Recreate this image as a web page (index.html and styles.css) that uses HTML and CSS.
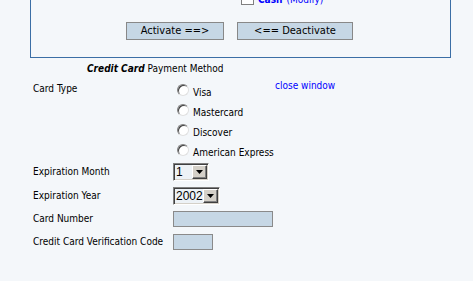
FILE: index.html
```html
<!DOCTYPE html>
<html>
<head>
<meta charset="utf-8">
<link rel="stylesheet" href="styles.css">
</head>
<body>
<div class="box">
  <div class="cash-row">
    <span class="check"></span>
    <a class="cash" href="#">Cash</a>
    <a class="modify" href="#">(Modify)</a>
  </div>
  <div class="btn-row">
    <button class="btn btn-act">Activate ==&gt;</button>
    <button class="btn btn-deact">&lt;== Deactivate</button>
  </div>
</div>

<div class="form">
  <div class="form-title"><b><i>Credit Card</i></b> Payment Method</div>
  <div class="grid">
    <div class="label label-top">Card Type</div>
    <div class="radios">
      <label class="radio-item"><input type="radio" name="ct" class="radio"><span class="radio-text">Visa</span></label>
      <label class="radio-item"><input type="radio" name="ct" class="radio"><span class="radio-text">Mastercard</span></label>
      <label class="radio-item"><input type="radio" name="ct" class="radio"><span class="radio-text">Discover</span></label>
      <label class="radio-item"><input type="radio" name="ct" class="radio"><span class="radio-text">American Express</span></label>
    </div>
    <div class="close-cell"><a class="close" href="#">close window</a></div>

    <div class="label row-month">Expiration Month</div>
    <div class="ctrl row-month">
      <span class="sel"><select class="sel-input sel-month"><option>1</option><option>2</option><option>12</option></select><span class="sel-btn"><svg width="7" height="4" viewBox="0 0 7 4"><path d="M0 0h7L3.5 4z" fill="#000"/></svg></span></span>
    </div>
    <div class="spacer row-month"></div>

    <div class="label row-year">Expiration Year</div>
    <div class="ctrl row-year">
      <span class="sel"><select class="sel-input sel-year"><option>2002</option><option>2003</option></select><span class="sel-btn"><svg width="7" height="4" viewBox="0 0 7 4"><path d="M0 0h7L3.5 4z" fill="#000"/></svg></span></span>
    </div>
    <div class="spacer row-year"></div>

    <div class="label row-num">Card Number</div>
    <div class="ctrl row-num"><input class="text-in in-num" type="text"></div>
    <div class="spacer row-num"></div>

    <div class="label row-ccv">Credit Card Verification Code</div>
    <div class="ctrl row-ccv"><input class="text-in in-ccv" type="text"></div>
    <div class="spacer row-ccv"></div>
  </div>
</div>
</body>
</html>
```

FILE: styles.css
```css
html, body {
  margin: 0;
  padding: 0;
  background: #f4f7fa;
}
body {
  font-family: "DejaVu Sans Condensed", "DejaVu Sans", sans-serif;
  font-stretch: condensed;
  font-size: 10px;
  line-height: 12px;
  color: #000;
  overflow: hidden;
}
a { text-decoration: none; }

.box {
  margin: -12px 0 0 30px;
  width: 419px;
  border: 1px solid #3b6ea5;
  padding: 5px 0 17px 0;
}
.cash-row {
  display: flex;
  align-items: flex-end;
  height: 12px;
  padding-left: 210px;
}
.check {
  width: 11px;
  height: 11px;
  background: #fff;
  border: 1px solid #808080;
  margin-right: 4px;
  margin-bottom: 1px;
}
.cash { color: #0000ff; font-weight: bold; margin-right: 4px; }
.modify { color: #0000ff; }

.btn-row {
  display: flex;
  gap: 13px;
  padding-left: 95px;
  margin-top: 16px;
}
.btn {
  font: inherit;
  font-size: 11px;
  height: 18px;
  padding: 0;
  margin: 0;
  background: #c6d7e5;
  border: 1px solid #888888;
  color: #000;
  line-height: 16px;
}
.btn-act { width: 98px; }
.btn-deact { width: 116px; }

.form {
  margin: 5px 0 0 33px;
}
.form-title {
  padding-left: 54px;
  height: 12px;
}
.grid {
  margin-top: 4px;
  display: grid;
  grid-template-columns: 140px 102px auto;
  align-items: center;
}
.label-top { align-self: start; padding-top: 4px; }
.radios { display: flex; flex-direction: column; }
.radio-item {
  display: flex;
  align-items: flex-start;
  height: 20px;
}
.radio {
  appearance: none;
  -webkit-appearance: none;
  width: 12px;
  height: 12px;
  margin: 5px 4px 0 4px;
  border-radius: 50%;
  background: #fff;
  border: 1px solid;
  border-color: #808080 #e0e0e0 #e0e0e0 #808080;
  box-shadow: inset 1px 1px 0 #404040;
}
.radio-text { padding-top: 8px; }
.close-cell { align-self: start; padding-top: 1px; }
.close { color: #0000ff; }

.row-month { margin-top: 4px; height: 18px; display: flex; align-items: center; }
.row-year { margin-top: 6px; height: 18px; display: flex; align-items: center; }
.row-num { margin-top: 6px; height: 16px; display: flex; align-items: center; }
.row-ccv { margin-top: 7px; height: 16px; display: flex; align-items: center; }

.sel {
  display: inline-flex;
  align-items: stretch;
  height: 18px;
  box-sizing: border-box;
  border: 1px solid;
  border-color: #808080 #ffffff #ffffff #808080;
  box-shadow: inset 1px 1px 0 #404040, inset -1px -1px 0 #d4d0c8;
  padding: 1px;
  background: #edf2f6;
}
.sel-input {
  appearance: none;
  -webkit-appearance: none;
  border: 0;
  background: transparent;
  font-family: "Liberation Sans", Arial, sans-serif;
  font-size: 12px;
  line-height: 14px;
  padding: 0 0 0 1px;
  margin: 0;
  color: #000;
  outline: none;
}
.sel-month { width: 17px; }
.sel-year { width: 28px; }
.sel-btn {
  width: 15px;
  box-sizing: border-box;
  background: #d4d0c8;
  border: 1px solid;
  border-color: #ffffff #404040 #404040 #ffffff;
  box-shadow: inset -1px -1px 0 #808080;
  display: flex;
  align-items: center;
  justify-content: center;
}

.text-in {
  box-sizing: border-box;
  height: 16px;
  border: 1px solid #8a8a8a;
  background: #c6d7e5;
  padding: 0;
  margin: 0;
}
.in-num { width: 100px; }
.in-ccv { width: 40px; }
```
